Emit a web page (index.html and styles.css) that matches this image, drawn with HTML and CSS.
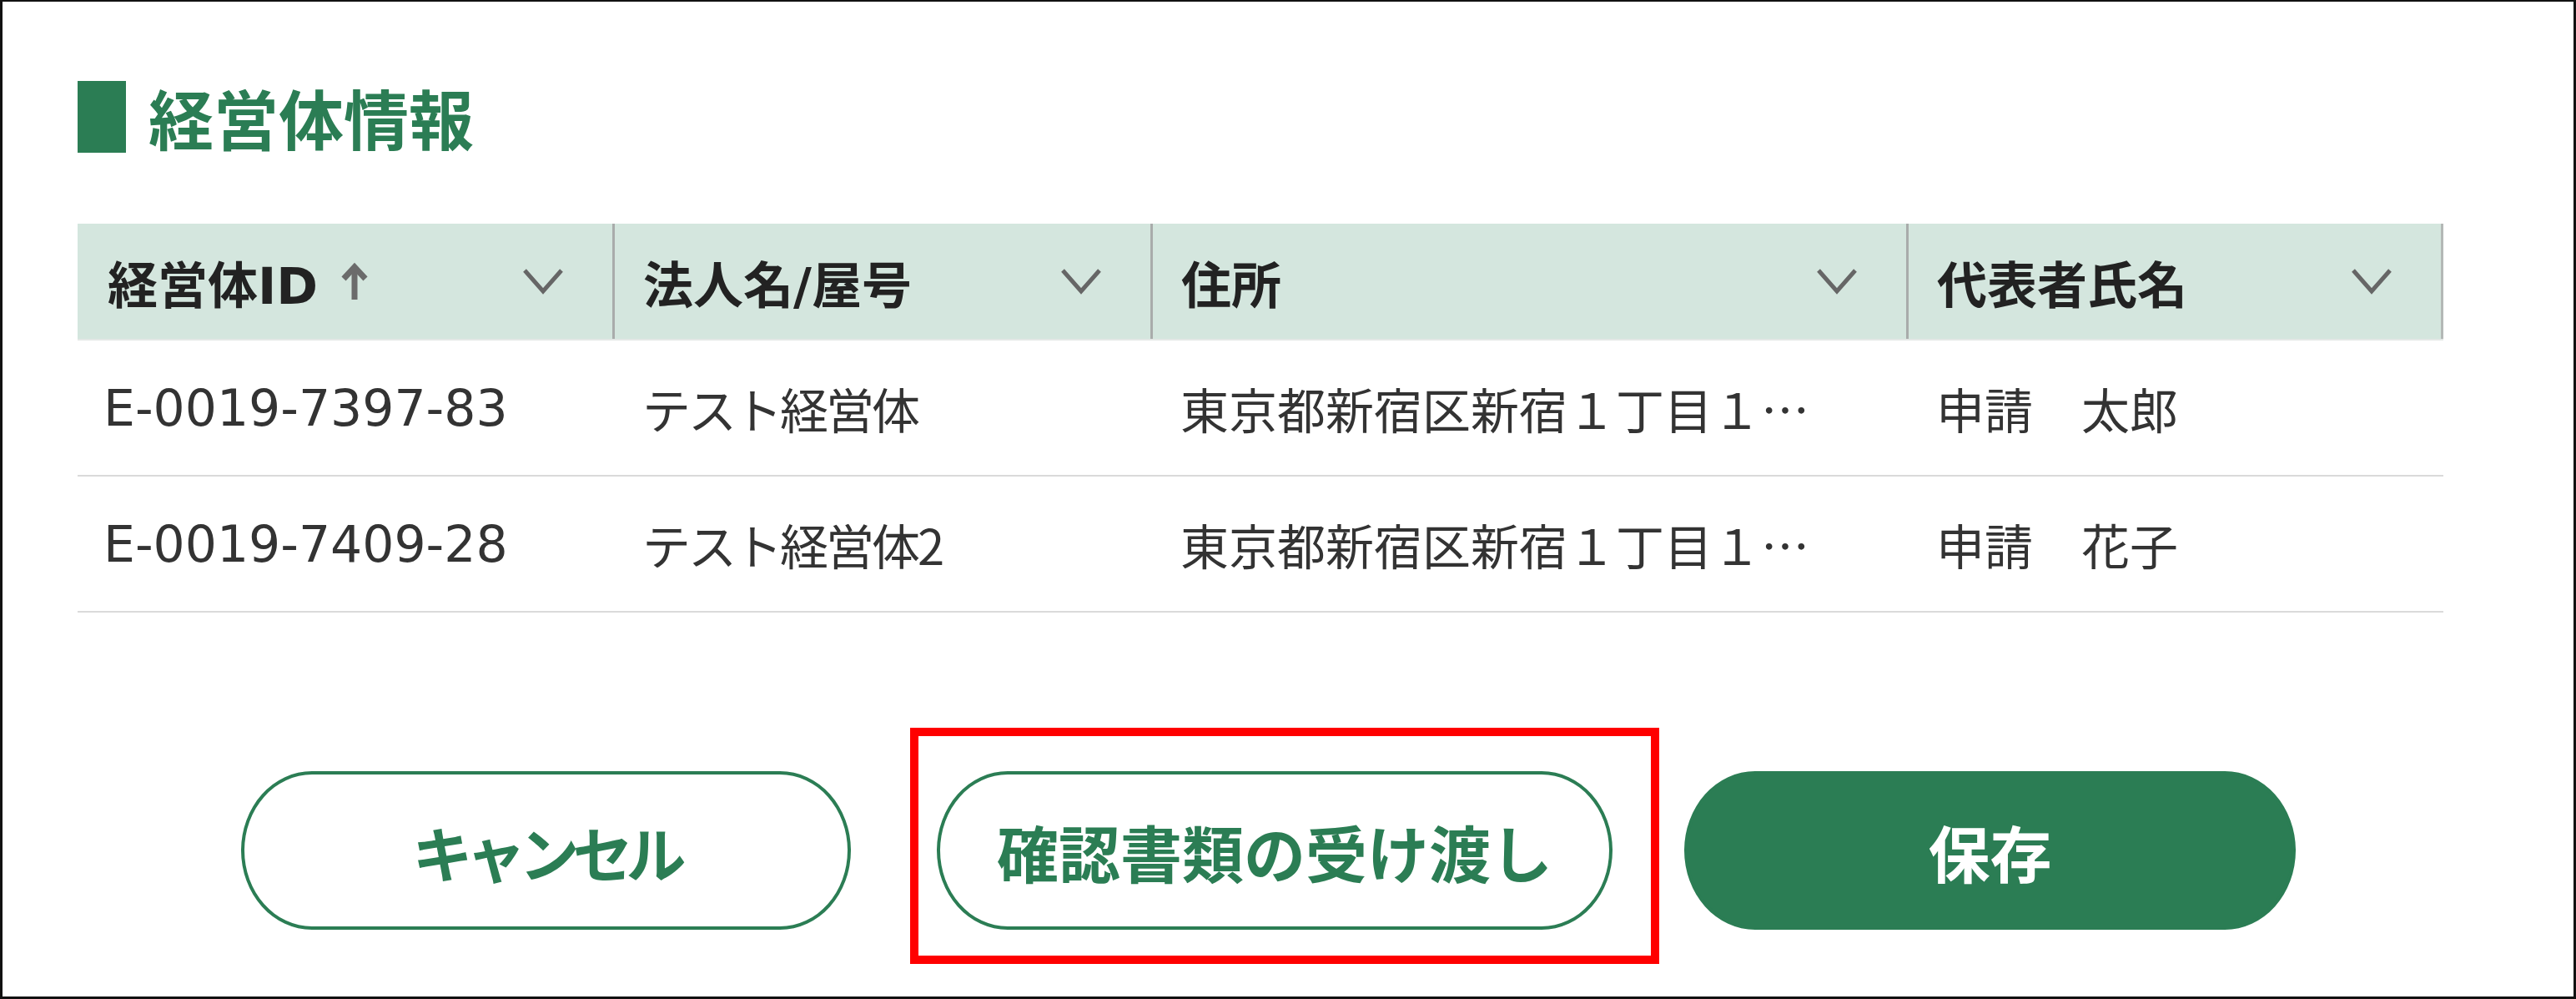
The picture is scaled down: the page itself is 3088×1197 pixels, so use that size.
FILE: index.html
```html
<!DOCTYPE html>
<html lang="ja">
<head>
<meta charset="utf-8">
<title>経営体情報</title>
<link rel="stylesheet" href="styles.css">
</head>
<body>
<div class="frame">
  <div class="panel">
    <div class="title">
      <span class="title-mark"></span>
      <h2 class="title-text">経営体情報</h2>
    </div>

    <div class="table">
      <div class="thead">
        <div class="th">
          <span class="th-label">経営体ID</span>
          <svg class="sort-arrow" width="34" height="46" viewBox="0 0 34 46"><path d="M17 45 V8" stroke="#6b6b6b" stroke-width="7" fill="none"/><path d="M4 20 L17 6 L30 20" stroke="#6b6b6b" stroke-width="7" fill="none" stroke-linejoin="miter"/></svg>
          <svg class="chev" width="50" height="32" viewBox="0 0 50 32"><polyline points="3,3 25,28 47,3" stroke="#666" stroke-width="5" fill="none"/></svg>
        </div>
        <div class="th">
          <span class="th-label">法人名/屋号</span>
          <svg class="chev" width="50" height="32" viewBox="0 0 50 32"><polyline points="3,3 25,28 47,3" stroke="#666" stroke-width="5" fill="none"/></svg>
        </div>
        <div class="th">
          <span class="th-label">住所</span>
          <svg class="chev" width="50" height="32" viewBox="0 0 50 32"><polyline points="3,3 25,28 47,3" stroke="#666" stroke-width="5" fill="none"/></svg>
        </div>
        <div class="th th-last">
          <span class="th-label">代表者氏名</span>
          <svg class="chev" width="50" height="32" viewBox="0 0 50 32"><polyline points="3,3 25,28 47,3" stroke="#666" stroke-width="5" fill="none"/></svg>
        </div>
      </div>

      <div class="tr">
        <div class="td td-id">E-0019-7397-83</div>
        <div class="td td-kana">テスト経営体</div>
        <div class="td">東京都新宿区新宿１丁目１…</div>
        <div class="td">申請　太郎</div>
      </div>
      <div class="tr">
        <div class="td td-id">E-0019-7409-28</div>
        <div class="td td-kana">テスト経営体2</div>
        <div class="td">東京都新宿区新宿１丁目１…</div>
        <div class="td">申請　花子</div>
      </div>
    </div>

    <div class="actions">
      <button class="btn btn-outline btn-cancel">キャンセル</button>
      <span class="highlight-wrap">
        <button class="btn btn-outline btn-docs">確認書類の受け渡し</button>
        <span class="highlight"></span>
      </span>
      <button class="btn btn-fill btn-save">保存</button>
    </div>
  </div>
</div>
</body>
</html>
```

FILE: styles.css
```css
* { box-sizing: border-box; }

html, body {
  margin: 0;
  padding: 0;
  background: #ffffff;
}

body {
  font-family: "Noto Sans CJK JP", "Noto Sans", sans-serif;
  color: #333333;
}

.frame {
  width: 3088px;
  height: 1197px;
  border: 3px solid #111111;
  border-top-width: 2px;
  overflow: hidden;
}

.panel {
  padding: 95px 0 0 90px;
}

/* ---- title ---- */
.title {
  display: flex;
  align-items: center;
  gap: 27px;
  height: 86px;
}

.title-mark {
  display: block;
  width: 58px;
  height: 86px;
  background: #2b7d54;
}

.title-text {
  margin: 0;
  font-size: 78px;
  line-height: 86px;
  font-weight: 700;
  color: #2b7d54;
}

/* ---- table ---- */
.table {
  margin-top: 85px;
  width: 2836px;
}

.thead,
.tr {
  display: grid;
  grid-template-columns: 641px 645px 906px 644px;
}

.thead {
  height: 140px;
  background: #d4e6de;
  border-bottom: 2px solid #e4e8e6;
}

.th {
  display: flex;
  align-items: center;
  padding: 0 58px 0 36px;
  font-family: "DejaVu Sans", "Noto Sans CJK JP", sans-serif;
  font-size: 60px;
  font-weight: 700;
  color: #222222;
}

.th + .th {
  border-left: 3px solid #a9acab;
  padding-left: 34px;
}

.th-last {
  border-right: 3px solid #b4b8b6;
}

.th-label {
  white-space: nowrap;
}

.sort-arrow {
  margin-left: 27px;
  flex: none;
}

.chev {
  margin-left: auto;
  flex: none;
}

.tr {
  height: 163px;
  border-bottom: 2px solid #dadada;
}

.td {
  display: flex;
  align-items: center;
  padding-left: 36px;
  font-size: 58px;
  color: #333333;
  white-space: nowrap;
  overflow: hidden;
}

.td-kana {
  letter-spacing: -3px;
}

.td-id {
  font-family: "DejaVu Sans", "Noto Sans CJK JP", sans-serif;
  font-size: 60px;
  padding-left: 31px;
}

/* ---- actions ---- */
.actions {
  display: flex;
  align-items: center;
  margin-top: 190px;
  padding-left: 196px;
}

.btn {
  height: 190px;
  border: 4px solid #2b7d54;
  border-radius: 85px / 95px;
  font-family: "Noto Sans CJK JP", sans-serif;
  font-size: 74px;
  font-weight: 700;
  padding: 0;
  cursor: pointer;
}

.btn-outline {
  background: #ffffff;
  color: #2b7d54;
}

.btn-fill {
  background: #2b7d54;
  color: #ffffff;
}

.btn-cancel {
  width: 731px;
  font-size: 72px;
  letter-spacing: -8px;
}

.highlight-wrap {
  position: relative;
  display: block;
  margin-left: 103px;
}

.btn-docs {
  display: block;
  width: 810px;
}

.highlight {
  position: absolute;
  left: -32px;
  top: -52px;
  right: -56px;
  bottom: -41px;
  border: 10px solid #ff0000;
  pointer-events: none;
}

.btn-save {
  width: 733px;
  margin-left: 86px;
}
```
